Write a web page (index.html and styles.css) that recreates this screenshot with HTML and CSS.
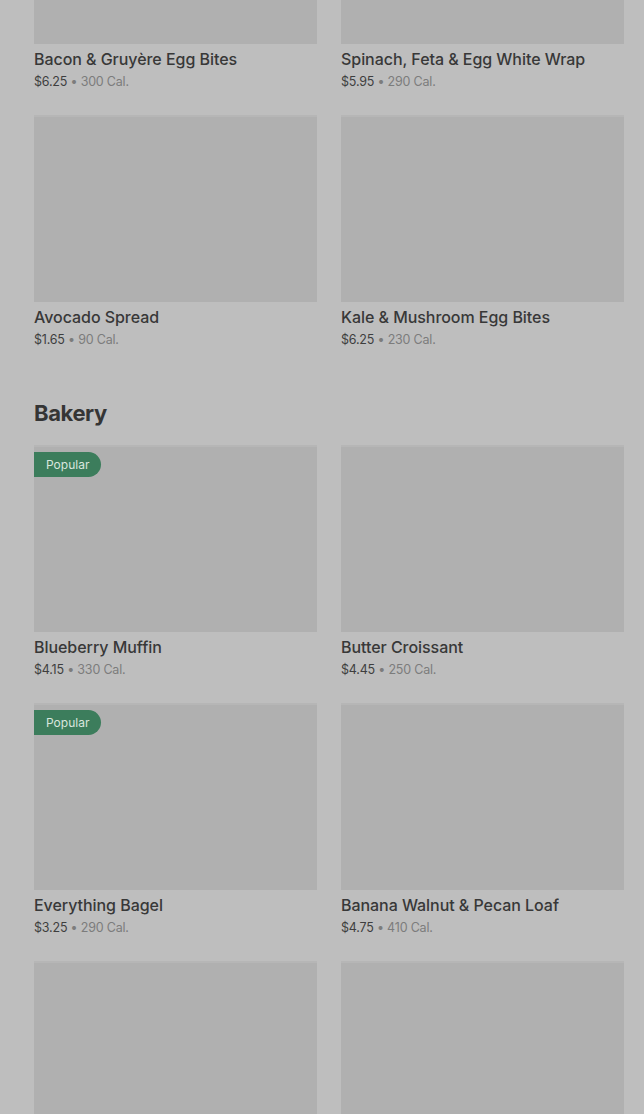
FILE: index.html
```html
<!DOCTYPE html>
<html lang="en">
<head>
    <meta charset="UTF-8">
    <meta name="viewport" content="width=device-width, initial-scale=1.0">
    <title>Menu</title>
    <link rel="stylesheet" href="styles.css">
</head>
<body>

<div class="menu">
    <div class="grid grid-top">
        <div class="item">
            <div class="thumb"></div>
            <div class="name">Bacon &amp; Gruyère Egg Bites</div>
            <div class="meta"><span class="price">$6.25</span> • 300 Cal.</div>
        </div>
        <div class="item">
            <div class="thumb"></div>
            <div class="name">Spinach, Feta &amp; Egg White Wrap</div>
            <div class="meta"><span class="price">$5.95</span> • 290 Cal.</div>
        </div>
        <div class="item">
            <div class="thumb"></div>
            <div class="name">Avocado Spread</div>
            <div class="meta"><span class="price">$1.65</span> • 90 Cal.</div>
        </div>
        <div class="item">
            <div class="thumb"></div>
            <div class="name">Kale &amp; Mushroom Egg Bites</div>
            <div class="meta"><span class="price">$6.25</span> • 230 Cal.</div>
        </div>
    </div>

    <h2 class="section-title">Bakery</h2>

    <div class="grid">
        <div class="item">
            <div class="thumb"><span class="badge">Popular</span></div>
            <div class="name">Blueberry Muffin</div>
            <div class="meta"><span class="price">$4.15</span> • 330 Cal.</div>
        </div>
        <div class="item">
            <div class="thumb"></div>
            <div class="name">Butter Croissant</div>
            <div class="meta"><span class="price">$4.45</span> • 250 Cal.</div>
        </div>
        <div class="item">
            <div class="thumb"><span class="badge">Popular</span></div>
            <div class="name">Everything Bagel</div>
            <div class="meta"><span class="price">$3.25</span> • 290 Cal.</div>
        </div>
        <div class="item">
            <div class="thumb"></div>
            <div class="name">Banana Walnut &amp; Pecan Loaf</div>
            <div class="meta"><span class="price">$4.75</span> • 410 Cal.</div>
        </div>
        <div class="item">
            <div class="thumb"></div>
        </div>
        <div class="item">
            <div class="thumb"></div>
        </div>
    </div>
</div>

</body>
</html>
```

FILE: styles.css
```css
body, html {
    margin: 0;
    overflow: hidden;
}
body {
    background: #bebebe;
    font-family: "Inter", "Roboto", sans-serif;
    color: #3a3a3a;
}
.menu {
    padding: 0 20px 0 34px;
}
.grid {
    display: grid;
    grid-template-columns: 283px 283px;
    column-gap: 24px;
    row-gap: 24px;
}
.grid-top {
    margin-top: -143px;
}
.item {
    display: flex;
    flex-direction: column;
}
.thumb {
    position: relative;
    height: 187px;
    background: #b0b0b0;
    border-top: 2px solid #b6b6b6;
    box-sizing: border-box;
}
.name {
    margin-top: 5px;
    font-size: 16px;
    line-height: 20px;
    font-weight: 500;
    color: #383838;
    letter-spacing: -0.05px;
}
.meta {
    margin-top: 4px;
    font-size: 12.5px;
    line-height: 18px;
    color: #7c7c7c;
    letter-spacing: -0.2px;
}
.meta .price {
    color: #3e3e3e;
}
.section-title {
    margin: 49px 0 17px;
    font-size: 22px;
    line-height: 30px;
    font-weight: 700;
    letter-spacing: -0.4px;
    color: #353535;
}
.badge {
    position: absolute;
    top: 5px;
    left: 0;
    height: 25px;
    line-height: 25px;
    padding: 0 12px;
    background: #3c7d5c;
    color: #d9e6de;
    font-size: 12px;
    border-radius: 0 13px 13px 0;
}
```
